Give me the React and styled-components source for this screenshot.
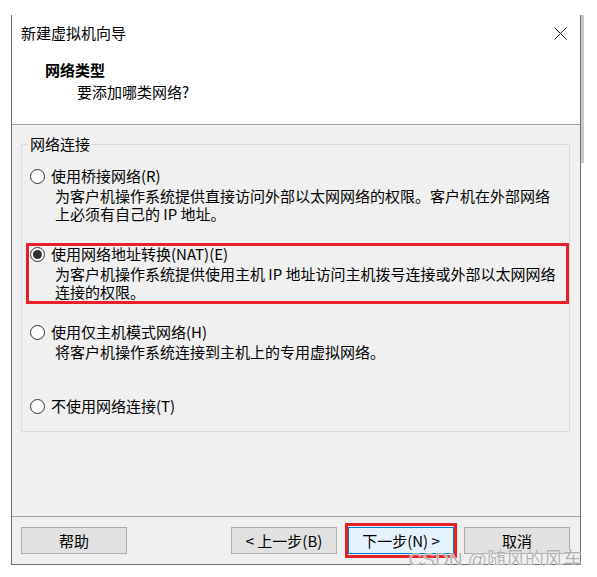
import React from "react";
import styled, { createGlobalStyle } from "styled-components";

const GlobalStyle = createGlobalStyle`
  html, body {
    margin: 0;
    padding: 0;
    background: #ffffff;
  }
  body {
    font-family: "Noto Sans CJK SC", "Noto Sans", sans-serif;
    font-size: 15px;
    color: #000;
  }
`;

const options = [
  {
    key: "bridge",
    label: "使用桥接网络(R)",
    desc: [
      "为客户机操作系统提供直接访问外部以太网网络的权限。客户机在外部网络",
      "上必须有自己的 IP 地址。",
    ],
  },
  {
    key: "nat",
    label: "使用网络地址转换(NAT)(E)",
    desc: [
      "为客户机操作系统提供使用主机 IP 地址访问主机拨号连接或外部以太网网络",
      "连接的权限。",
    ],
    checked: true,
    marked: true,
  },
  {
    key: "host",
    label: "使用仅主机模式网络(H)",
    desc: ["将客户机操作系统连接到主机上的专用虚拟网络。"],
  },
  {
    key: "none",
    label: "不使用网络连接(T)",
    desc: [],
  },
];

const App = () => {
  return (
    <>
      <GlobalStyle />
      <Page>
        <Window>
          <Header>
            <TitleRow>
              <Title>新建虚拟机向导</Title>
              <CloseButton aria-label="close">
                <svg width="13" height="13" viewBox="0 0 13 13">
                  <path
                    d="M0.5 0.5 L12.5 12.5 M12.5 0.5 L0.5 12.5"
                    stroke="#111"
                    strokeWidth="1"
                    fill="none"
                  />
                </svg>
              </CloseButton>
            </TitleRow>
            <Heading>网络类型</Heading>
            <SubHeading>要添加哪类网络?</SubHeading>
          </Header>

          <Body>
            <Group>
              <Legend>网络连接</Legend>
              <OptionList>
                {options.map((opt) => (
                  <Option key={opt.key} marked={opt.marked}>
                    <OptionLabel>
                      <Radio checked={opt.checked} />
                      <span>{opt.label}</span>
                    </OptionLabel>
                    {opt.desc.length > 0 && (
                      <Desc>
                        {opt.desc.map((line, i) => (
                          <DescLine key={i}>{line}</DescLine>
                        ))}
                      </Desc>
                    )}
                  </Option>
                ))}
              </OptionList>
            </Group>
          </Body>

          <Footer>
            <Button>帮助</Button>
            <NavButtons>
              <Button>&lt; 上一步(B)</Button>
              <Highlight>
                <Button primary>下一步(N) &gt;</Button>
              </Highlight>
              <Button>取消</Button>
            </NavButtons>
          </Footer>

          <Watermark>CSDN @随风的风车</Watermark>
        </Window>
        <ScrollStrip />
      </Page>
    </>
  );
};
export default App;

const Page = styled.div`
  display: flex;
  align-items: flex-start;
  padding: 15px 0 0 11px;
`;

const Window = styled.div`
  position: relative;
  width: 568px;
  border: 1px solid #6e6e6e;
  border-top: none;
  background: #f0f0f0;
`;

const ScrollStrip = styled.div`
  width: 3px;
  height: 148px;
  background: #c9c9c9;
`;

const Header = styled.div`
  display: flex;
  flex-direction: column;
  height: 109px;
  background: #ffffff;
  border-bottom: 1px solid #a0a0a0;
`;

const TitleRow = styled.div`
  display: flex;
  align-items: center;
  justify-content: space-between;
  height: 20px;
  margin-top: 8px;
  padding: 0 13px 0 9px;
`;

const Title = styled.span`
  font-size: 15px;
  line-height: 20px;
`;

const CloseButton = styled.span`
  display: flex;
  align-items: center;
  width: 13px;
  height: 13px;
`;

const Heading = styled.div`
  margin: 19px 0 0 33px;
  font-size: 15px;
  font-weight: bold;
  line-height: 16px;
`;

const SubHeading = styled.div`
  margin: 6px 0 0 65px;
  font-size: 15px;
  line-height: 16px;
`;

const Body = styled.div`
  display: flow-root;
  box-sizing: border-box;
  height: 392px;
  border-bottom: 1px solid #a0a0a0;
`;

const Group = styled.fieldset`
  margin: 11px 10px 0 9px;
  padding: 0 0 17px 0;
  border: 1px solid #dcdcdc;
  min-width: 0;
`;

const Legend = styled.legend`
  margin-left: 6px;
  padding: 0 2px;
  font-size: 15px;
  line-height: 16px;
`;

const OptionList = styled.div`
  display: flex;
  flex-direction: column;
  padding-top: 16px;
  gap: 18px;

  & > :nth-child(2) {
    margin-top: 2px;
  }
  & > :nth-child(3) {
    margin-top: 2px;
  }
  & > :nth-child(4) {
    margin-top: 19px;
  }
`;

const Option = styled.div`
  display: flex;
  flex-direction: column;
  margin-left: ${(p) => (p.marked ? "4px" : "8px")};
  padding-left: ${(p) => (p.marked ? "1px" : "0")};
  border: ${(p) => (p.marked ? "3px solid #e8202a" : "none")};
`;

const OptionLabel = styled.div`
  display: flex;
  align-items: center;
  gap: 6px;
  line-height: 16px;
  height: 16px;
`;

const Radio = styled.span`
  box-sizing: border-box;
  display: flex;
  align-items: center;
  justify-content: center;
  width: 15px;
  height: 15px;
  border: 1px solid #333333;
  border-radius: 50%;
  background: #ffffff;

  &::after {
    content: "";
    display: ${(p) => (p.checked ? "block" : "none")};
    width: 9px;
    height: 9px;
    border-radius: 50%;
    background: #333333;
  }
`;

const Desc = styled.div`
  margin-top: 3px;
  padding-left: 25px;
`;

const DescLine = styled.div`
  line-height: 18px;
  white-space: nowrap;
`;

const Footer = styled.div`
  display: flex;
  align-items: center;
  justify-content: space-between;
  height: 47px;
  padding: 0 10px 0 9px;
`;

const NavButtons = styled.div`
  display: flex;
  align-items: center;
  gap: 8px;
`;

const Highlight = styled.div`
  display: flex;
  padding: 1px 0;
  border: 3px solid #e8202a;
  margin-right: -1px;
`;

const Button = styled.button`
  box-sizing: border-box;
  width: 106px;
  height: 27px;
  padding: 0;
  font-family: "Noto Sans CJK SC", "Noto Sans", sans-serif;
  font-size: 15px;
  line-height: 16px;
  color: #000;
  background: ${(p) => (p.primary ? "#e5f1fb" : "#e1e1e1")};
  border: 1px solid ${(p) => (p.primary ? "#0078d7" : "#adadad")};
  border-radius: 0;
`;

const Watermark = styled.div`
  position: absolute;
  right: -2px;
  bottom: -7px;
  font-family: "Liberation Sans", "Noto Sans CJK SC", sans-serif;
  font-size: 19px;
  line-height: 22px;
  color: rgba(100, 100, 100, 0.5);
  text-shadow: 0 0 1px #fff, 0 0 1px #fff;
  pointer-events: none;
  white-space: nowrap;
`;
